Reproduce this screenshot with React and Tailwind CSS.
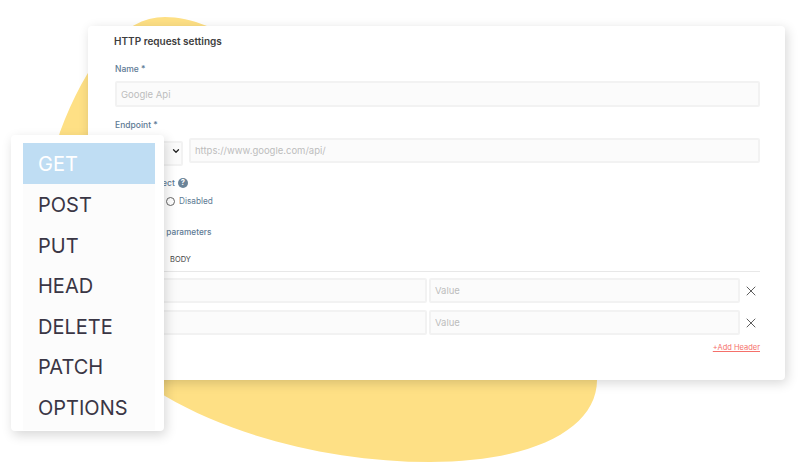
import { ChevronDown, X } from "lucide-react";

const methods = ["POST", "PUT", "HEAD", "DELETE", "PATCH", "OPTIONS"];

const inputClass =
  "block h-full w-full rounded-[2px] border-2 border-[#f2f2f2] bg-[#fbfbfb] px-[4px] text-[9.5px] outline-none placeholder:text-[#bdbdbd]";

function Label({ children, className = "" }) {
  return <div className={`text-[8.5px] leading-[12px] font-medium text-[#5d7a94] ${className}`}>{children}</div>;
}

function HeaderRow() {
  return (
    <div className="flex h-[25px] items-center">
      <div className="h-full w-[312px]">
        <input className={inputClass} placeholder="Key" readOnly />
      </div>
      <div className="ml-[2px] h-full w-[311px]">
        <input className={inputClass} placeholder="Value" readOnly />
      </div>
      <X size={16} strokeWidth={1.3} className="ml-[3px] text-[#444444]" />
    </div>
  );
}

export default function App() {
  return (
    <div className="relative h-[462px] w-[800px] overflow-hidden bg-white font-['Inter',sans-serif]">
      {/* yellow blob behind everything */}
      <svg className="absolute top-0 left-0" width="800" height="462" viewBox="0 0 800 462">
        <path
          d="M165 17 C122 17 86 62 60 132 C38 200 60 320 165 396 C240 440 340 462 430 462 C530 462 597 430 597 380 C600 220 400 90 207 26 C192 20 178 17 165 17 Z"
          fill="#fee085"
        />
      </svg>

      {/* settings card */}
      <div className="relative mt-[26px] ml-[88px] h-[354px] w-[697px] rounded-[4px] bg-white pt-[9px] pr-[25px] pl-[27px] shadow-[2px_3px_12px_rgba(0,0,0,0.16)]">
        <div className="-ml-px text-[10px] leading-[13px] font-semibold text-[#3d3d3d]">HTTP request settings</div>

        <Label className="mt-[15px]">Name *</Label>
        <div className="mt-[6px] h-[26px]">
          <input className={inputClass} placeholder="Google Api" readOnly />
        </div>

        <Label className="mt-[12px]">Endpoint *</Label>
        <div className="mt-[7px] flex h-[25px] gap-[6px]">
          <div className="relative h-full w-[68px] shrink-0">
            <select className="h-full w-full appearance-none rounded-[2px] border-2 border-[#f2f2f2] bg-[#fbfbfb] px-[4px] text-[9.5px] text-[#444444]">
              <option>GET</option>
            </select>
            <ChevronDown size={10} strokeWidth={3} className="absolute top-[8px] right-[2px] text-[#222222]" />
          </div>
          <input className={inputClass} placeholder="https://www.google.com/api/" readOnly />
        </div>

        <div className="mt-[14px] flex items-center gap-[3px]">
          <Label>Follow redirect</Label>
          <span className="flex h-[10px] w-[10px] items-center justify-center rounded-full bg-[#6b8499] text-[7.5px] leading-none font-bold text-white">
            ?
          </span>
        </div>

        <div className="mt-[6px] flex h-[12px] items-center">
          <span className="h-[9px] w-[9px] rounded-full border border-[#666666]" />
          <span className="ml-[4px] w-[38px] text-[8.5px] text-[#5d7a94]">Enabled</span>
          <span className="h-[9px] w-[9px] rounded-full border border-[#666666]" />
          <span className="ml-[4px] text-[8.25px] leading-[12px] text-[#5d7a94]">Disabled</span>
        </div>

        <Label className="mt-[19px] !text-[8.25px]">Query string parameters</Label>

        <div className="mt-[16px] flex h-[18px] border-b border-[#e8e8e8] text-[7.5px] leading-[12px] text-[#444444]">
          <span className="w-[55px]">HEADERS</span>
          <span>BODY</span>
        </div>

        <div className="mt-[6px] flex flex-col gap-[7px]">
          <HeaderRow />
          <HeaderRow />
        </div>

        <div className="mt-[7px] text-right text-[7.5px] leading-[12px] text-[#f5706a] underline">+Add Header</div>
      </div>

      {/* method dropdown overlapping the card */}
      <div className="absolute top-[135px] left-[11px] h-[296px] w-[153px] rounded-[4px] bg-white px-[12px] pt-[8px] shadow-[2px_4px_12px_rgba(0,0,0,0.16)]">
        <div className="w-[132px] bg-[#fcfcfc] pb-[3px]">
          <div className="flex h-[41px] items-center bg-[#bfddf3] pt-[1px] pl-[15px] text-[20px] text-white">GET</div>
          {methods.map((m) => (
            <div key={m} className="flex h-[40.5px] items-center pt-[2px] pl-[15px] text-[20px] text-[#3a3645]">
              {m}
            </div>
          ))}
        </div>
      </div>
    </div>
  );
}
